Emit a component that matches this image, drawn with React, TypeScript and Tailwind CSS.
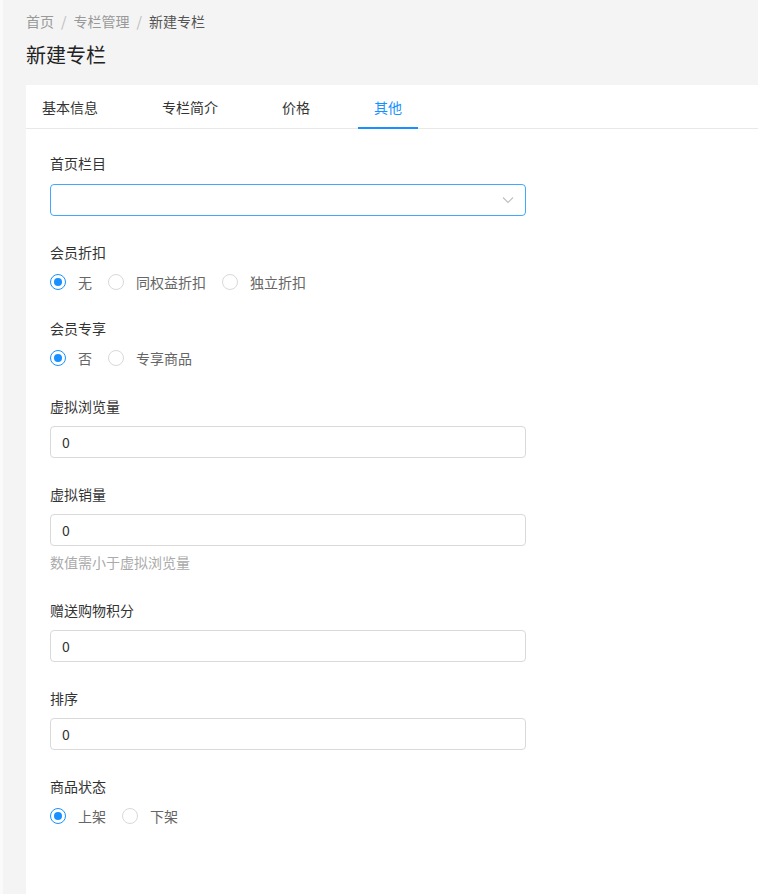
import * as React from "react";

const tabs = ["基本信息", "专栏简介", "价格", "其他"];

function Radio({ label, checked }: { label: string; checked?: boolean }) {
  return (
    <label className="mr-4 flex items-center">
      <span
        className={
          checked
            ? "flex size-4 items-center justify-center rounded-full border border-[#1890ff] bg-white"
            : "flex size-4 items-center justify-center rounded-full border border-[#d9d9d9] bg-white"
        }
      >
        {checked && <span className="size-2 rounded-full bg-[#1890ff]" />}
      </span>
      <span className="ml-3 text-sm leading-[18px] text-[#666]">{label}</span>
    </label>
  );
}

function Label({ children, gap = "mb-[9px]" }: { children: React.ReactNode; gap?: string }) {
  return <div className={gap + " h-[22px] text-sm leading-[22px] text-[#333]"}>{children}</div>;
}

function NumberInput({ value }: { value: string }) {
  return (
    <div className="flex h-8 w-[476px] items-center rounded border border-[#d9d9d9] bg-white px-[11px] text-sm text-[#333]">
      {value}
    </div>
  );
}

export default function App() {
  return (
    <div
      className="flex min-h-[894px] w-full bg-[#f4f4f4]"
      style={{ fontFamily: '"Noto Sans CJK SC", "Noto Sans", sans-serif' }}
    >
      <div className="w-[3px] shrink-0 bg-[#fafafa]" />
      <div className="flex flex-1 flex-col pl-[23px]">
        {/* header */}
        <div className="pt-3 pb-4">
          <div className="flex items-center text-sm leading-[18px] text-[#999]">
            <span>首页</span>
            <span className="px-[7px] text-[#bbb]">/</span>
            <span>专栏管理</span>
            <span className="px-[7px] text-[#bbb]">/</span>
            <span className="text-[#555]">新建专栏</span>
          </div>
          <h1 className="mt-[11px] text-xl leading-7 text-[#222]">新建专栏</h1>
        </div>

        {/* card */}
        <div className="flex-1 bg-white">
          <div className="flex h-11 border-b border-[#e8e8e8]">
            {tabs.map((t, i) => {
              const active = i === tabs.length - 1;
              return (
                <div
                  key={t}
                  className={
                    active
                      ? "relative mr-8 flex items-center px-4 text-sm text-[#1890ff]"
                      : "relative mr-8 flex items-center px-4 text-sm text-[#333]"
                  }
                >
                  {t}
                  {active && <span className="absolute bottom-[-1px] left-0 h-[2px] w-full bg-[#1890ff]" />}
                </div>
              );
            })}
          </div>

          <div className="pl-6 pt-[23px]">
            <div className="mb-[25px]">
              <Label gap="mb-[10px]">首页栏目</Label>
              <div className="flex h-8 w-[476px] items-center justify-end rounded border border-[#40a9ff] bg-white pr-[11px]">
                <svg width="12" height="8" viewBox="0 0 12 8" fill="none">
                  <path d="M1 1.5 6 6.5 11 1.5" stroke="#bfbfbf" strokeWidth="1.1" />
                </svg>
              </div>
            </div>

            <div className="mb-[26px]">
              <Label gap="mb-[10px]">会员折扣</Label>
              <div className="flex h-[18px] items-center">
                <Radio label="无" checked />
                <Radio label="同权益折扣" />
                <Radio label="独立折扣" />
              </div>
            </div>

            <div className="mb-[28px]">
              <Label gap="mb-[10px]">会员专享</Label>
              <div className="flex h-[18px] items-center">
                <Radio label="否" checked />
                <Radio label="专享商品" />
              </div>
            </div>

            <div className="mb-[25px]">
              <Label>虚拟浏览量</Label>
              <NumberInput value="0" />
            </div>

            <div className="mb-[27px]">
              <Label>虚拟销量</Label>
              <NumberInput value="0" />
              <div className="mt-[6px] text-sm leading-5 text-[#aaa]">数值需小于虚拟浏览量</div>
            </div>

            <div className="mb-[25px]">
              <Label>赠送购物积分</Label>
              <NumberInput value="0" />
            </div>

            <div className="mb-[25px]">
              <Label>排序</Label>
              <NumberInput value="0" />
            </div>

            <div className="mb-[25px]">
              <Label gap="mb-[10px]">商品状态</Label>
              <div className="flex h-[18px] items-center">
                <Radio label="上架" checked />
                <Radio label="下架" />
              </div>
            </div>
          </div>
        </div>
      </div>
    </div>
  );
}
